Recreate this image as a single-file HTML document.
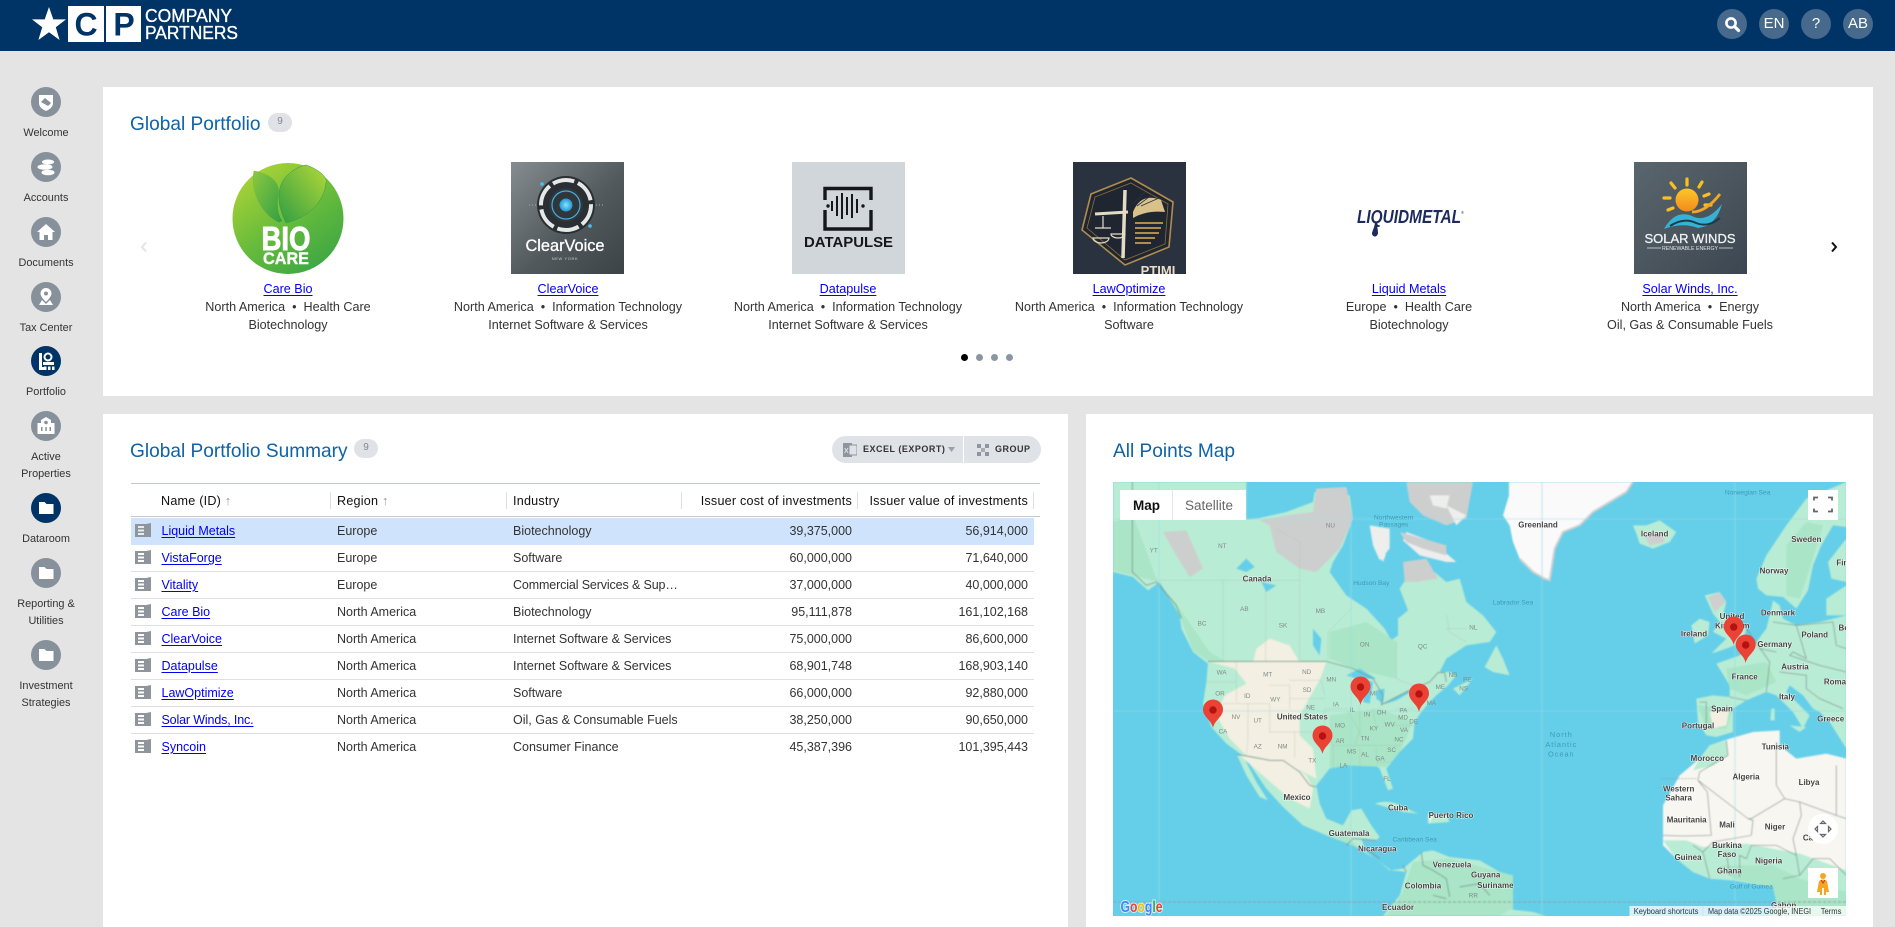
<!DOCTYPE html>
<html lang="en"><head><meta charset="utf-8"><title>Portfolio</title>
<style>
*{box-sizing:border-box}
html,body{margin:0;padding:0;width:1895px;height:927px;overflow:hidden;background:#e4e4e4;font-family:"Liberation Sans",sans-serif;color:#333}
.a{position:absolute}
#hdr{position:absolute;left:0;top:0;width:1895px;height:51px;background:#003366}
.hb{position:absolute;top:9px;width:30px;height:30px;border-radius:50%;background:#47698c;color:#fff;font-size:15px;line-height:30px;text-align:center}
.panel{position:absolute;background:#fff}
.ttl{position:absolute;font-size:19.1px;color:#0d62a8;line-height:24px;white-space:nowrap}
.bdg{position:absolute;width:24px;height:19px;border-radius:10px;background:#dfe2e7;color:#888;font-size:10px;line-height:18px;text-align:center}
.ci{position:absolute;left:31px;width:30px;height:30px;border-radius:50%;background:#87919c}
.ci.on{background:#003366}
.ci svg{position:absolute;left:0;top:0}
.sl{position:absolute;left:0;width:92px;text-align:center;font-size:10.9px;line-height:16px;color:#333;white-space:nowrap}
.cc{position:absolute;width:280px;text-align:center;font-size:12.6px;line-height:18px;white-space:nowrap;color:#333}
a{color:#0000ee;text-decoration:underline;text-underline-offset:2px}
.dot{position:absolute;top:354px;width:7px;height:7px;border-radius:50%;background:#8a96a3}
.th{position:absolute;top:492px;height:18px;line-height:18px;font-size:12.6px;letter-spacing:.22px;color:#111;white-space:nowrap}
.sep{position:absolute;top:492px;width:1px;height:17px;background:#dcdfe3}
.r{position:absolute;left:131px;width:903px;height:27px;border-bottom:1px solid #dcdfe3;font-size:12.5px;line-height:26px;white-space:nowrap;color:#333}
.r.sel{background:#cfe4fc;border-bottom-color:#cfe4fc}
.r span,.r a,.r svg{position:absolute}
.r svg{left:4px;top:5px}
.n{left:30.5px}.g{left:206px}.i{left:382px}
.c{right:182px}.v{right:6px}
.btn{position:absolute;top:436px;height:27px;background:#dfe2e7;font-size:9px;font-weight:700;letter-spacing:.5px;line-height:27px;color:#333;white-space:nowrap}
</style></head><body>

<div id="hdr">
<svg class="a" style="left:0;top:0" width="250" height="51">
<polygon points="49,7 53.3,19.4 66,19.4 55.8,27.2 59.6,40 49,32.3 38.4,40 42.2,27.2 32,19.4 44.7,19.4" fill="#fff"/>
<rect x="68" y="6" width="36" height="36" fill="#fff"/><rect x="106" y="6" width="35" height="36" fill="#fff"/>
<text x="86" y="35.500" text-anchor="middle" font-size="32" font-weight="700" fill="#003366" font-family="Liberation Sans">C</text>
<text x="124" y="35.500" text-anchor="middle" font-size="32" font-weight="700" fill="#003366" font-family="Liberation Sans">P</text>
<text x="145" y="22" font-size="18" fill="#fff" stroke="#fff" stroke-width=".35" font-family="Liberation Sans" textLength="87" lengthAdjust="spacingAndGlyphs">COMPANY</text>
<text x="145" y="39" font-size="18" fill="#fff" stroke="#fff" stroke-width=".35" font-family="Liberation Sans" textLength="93" lengthAdjust="spacingAndGlyphs">PARTNERS</text>
</svg>
<div class="hb" style="left:1717px"><svg width="30" height="30" style="position:absolute;left:0;top:0"><circle cx="14" cy="14" r="4.600" fill="none" stroke="#fff" stroke-width="2.600"/><path d="M17.500 17.500 L21.500 21.500" stroke="#fff" stroke-width="3.200" stroke-linecap="round"/></svg></div>
<div class="hb" style="left:1759px">EN</div>
<div class="hb" style="left:1801px">?</div>
<div class="hb" style="left:1843px">AB</div>
</div>

<!-- sidebar -->
<div class="ci" style="top:87px"><svg width="30" height="30"><path d="M8 8h14v8c0 4-3.500 6.500-7 8-3.500-1.500-7-4-7-8z" fill="#fff"/><path d="M10 15l4-4 6 5-3 3z" fill="#87919c"/></svg></div>
<div class="sl" style="top:125px">Welcome</div>
<div class="ci" style="top:152px"><svg width="30" height="30"><ellipse cx="17" cy="10" rx="6" ry="2.500" fill="#fff"/><ellipse cx="14" cy="15" rx="7.500" ry="2.800" fill="#fff"/><ellipse cx="17" cy="20.500" rx="6.500" ry="2.800" fill="#fff"/></svg></div>
<div class="sl" style="top:190px">Accounts</div>
<div class="ci" style="top:217px"><svg width="30" height="30"><path d="M15 7 L24 15 H21.500 V23 H17 V18 H13 V23 H8.500 V15 H6z" fill="#fff"/></svg></div>
<div class="sl" style="top:255px">Documents</div>
<div class="ci" style="top:282px"><svg width="30" height="30"><path d="M15 6a5.500 5.500 0 0 1 5.500 5.500c0 2.500-3 6-5.500 8.500-2.500-2.500-5.500-6-5.500-8.500A5.500 5.500 0 0 1 15 6z" fill="#fff"/><circle cx="15" cy="11.500" r="2" fill="#87919c"/><path d="M8 23l3-5 4 4 4-4 3 5z" fill="#fff"/></svg></div>
<div class="sl" style="top:320px">Tax Center</div>
<div class="ci on" style="top:346px"><svg width="30" height="30"><path d="M8 7h3v14h4v3H8z" fill="#fff"/><circle cx="17" cy="11" r="3.500" fill="none" stroke="#fff" stroke-width="2"/><path d="M12 16h11v3H12zM13 20.500h2.500V24H13zM17 20.500h2.500V24H17zM21 20.500h2.500V24H21z" fill="#fff"/></svg></div>
<div class="sl" style="top:384px">Portfolio</div>
<div class="ci" style="top:411px"><svg width="30" height="30"><path d="M15 6l5 3v3h3.500v11H6.500V12H10V9z" fill="#fff"/><circle cx="15" cy="11.500" r="1.800" fill="#87919c"/><path d="M10 16h1.500v4H10zM14.300 16h1.500v4h-1.500zM18.500 16H20v4h-1.500z" fill="#87919c"/></svg></div>
<div class="sl" style="top:449px">Active</div><div class="sl" style="top:466px">Properties</div>
<div class="ci on" style="top:493px"><svg width="30" height="30"><path d="M8 9h5.500l2 2H22.500v10H8z" fill="#fff"/></svg></div>
<div class="sl" style="top:531px">Dataroom</div>
<div class="ci" style="top:558px"><svg width="30" height="30"><path d="M8 9h5.500l2 2H22.500v10H8z" fill="#fff"/></svg></div>
<div class="sl" style="top:596px">Reporting &amp;</div><div class="sl" style="top:613px">Utilities</div>
<div class="ci" style="top:640px"><svg width="30" height="30"><path d="M8 9h5.500l2 2H22.500v10H8z" fill="#fff"/></svg></div>
<div class="sl" style="top:678px">Investment</div><div class="sl" style="top:695px">Strategies</div>

<!-- panels -->
<div class="panel" style="left:103px;top:87px;width:1770px;height:309px"></div>
<div class="panel" style="left:103px;top:414px;width:965px;height:513px"></div>
<div class="panel" style="left:1086px;top:414px;width:787px;height:513px"></div>

<div class="ttl" style="left:130px;top:113px">Global Portfolio</div>
<div class="bdg" style="left:268px;top:113px">9</div>

<!-- Carousel logos -->
<svg class="a" style="left:232px;top:163px" width="112" height="111" viewBox="0 0 112 111">
<defs>
<linearGradient id="cb" x1="0.1" y1="0" x2="0.8" y2="1"><stop offset="0" stop-color="#b5d635"/><stop offset=".55" stop-color="#66bb3c"/><stop offset="1" stop-color="#3aa545"/></linearGradient>
<linearGradient id="l1" x1="0" y1="0" x2="1" y2="1"><stop offset="0" stop-color="#8bc83f"/><stop offset="1" stop-color="#2f9e44"/></linearGradient>
<linearGradient id="l2" x1="0" y1="1" x2="1" y2="0"><stop offset="0" stop-color="#2f9e44"/><stop offset="1" stop-color="#b4d838"/></linearGradient>
</defs>
<circle cx="56" cy="55.500" r="55.500" fill="url(#cb)"/>
<path d="M47 60 C30 52 18 30 22 8 C36 10 48 18 47 30 C45 42 46 52 51 58z" fill="url(#l1)" stroke="#7fc03b" stroke-width=".6"/>
<path d="M54 60 C46 44 44 28 52 16 C58 8 68 3 74 2 C86 6 96 14 94 20 C92 38 78 54 54 60z" fill="url(#l2)" stroke="#2f9e44" stroke-width=".5"/>
<text x="54" y="87" text-anchor="middle" font-size="33" font-weight="700" fill="#fff" stroke="#fff" stroke-width=".9" font-family="Liberation Sans" textLength="49" lengthAdjust="spacingAndGlyphs">BIO</text>
<text x="54" y="101" text-anchor="middle" font-size="17" font-weight="700" fill="#fff" stroke="#fff" stroke-width=".4" font-family="Liberation Sans" textLength="46" lengthAdjust="spacingAndGlyphs">CARE</text>
</svg>

<svg class="a" style="left:511px;top:162px" width="113" height="112" viewBox="0 0 113 112">
<defs><linearGradient id="cv" x1="0" y1="0" x2="1" y2="1"><stop offset="0" stop-color="#868d90"/><stop offset=".55" stop-color="#52595d"/><stop offset="1" stop-color="#3c4347"/></linearGradient>
<radialGradient id="cvb"><stop offset="0" stop-color="#8fe0fb"/><stop offset="1" stop-color="#1c9ad6"/></radialGradient></defs>
<rect width="113" height="112" fill="url(#cv)"/>
<circle cx="55" cy="43" r="29" fill="#2a2f33"/>
<circle cx="55" cy="43" r="25" fill="none" stroke="#e6e8e8" stroke-width="4" stroke-dasharray="22 4"/>
<circle cx="55" cy="43" r="17" fill="#30363a"/>
<circle cx="55" cy="43" r="14" fill="none" stroke="#3fb0e4" stroke-width="1.200"/>
<circle cx="55" cy="43" r="6.500" fill="url(#cvb)"/>
<circle cx="31" cy="22" r="1.800" fill="#4cc1f0"/><circle cx="79" cy="64" r="1.800" fill="#4cc1f0"/>
<path d="M18 43h7M85 43h7" stroke="#aab" stroke-width="1" stroke-dasharray="1 2"/>
<text x="54" y="89" text-anchor="middle" font-size="17" fill="#fff" stroke="#fff" stroke-width=".3" font-family="Liberation Sans" textLength="79" lengthAdjust="spacingAndGlyphs">ClearVoice</text>
<text x="54" y="98" text-anchor="middle" font-size="4" fill="#ccc" font-family="Liberation Sans" letter-spacing=".6">NEW YORK</text>
</svg>

<svg class="a" style="left:792px;top:162px" width="113" height="112" viewBox="0 0 113 112">
<rect width="113" height="112" fill="#d0d6da"/>
<path d="M33 38 V26.500 H79 V38 M33 48 V67 H79 V48" fill="none" stroke="#15181b" stroke-width="3.400"/>
<path d="M40 39v10M45 34v20M50 31v26M55 35v18M60 32v24M65 37v14" stroke="#15181b" stroke-width="2" fill="none"/>
<circle cx="36" cy="44" r="1.700" fill="#15181b"/><circle cx="71" cy="44" r="1.700" fill="#15181b"/>
<text x="56.500" y="85" text-anchor="middle" font-size="15" font-weight="700" fill="#15181b" font-family="Liberation Sans" textLength="89" lengthAdjust="spacingAndGlyphs">DATAPULSE</text>
</svg>

<svg class="a" style="left:1073px;top:162px" width="113" height="112" viewBox="0 0 113 112">
<rect width="113" height="112" fill="#2a323f"/>
<polygon points="58,16 100,40 96,85 52,103 9,68 18,32" fill="#1f2632" stroke="#b08d4e" stroke-width="1.600"/>
<polygon points="58,21 95,42 92,82 52,98 14,66 22,35" fill="none" stroke="#8a6f3e" stroke-width=".8"/>
<path d="M52 28 L50 96" stroke="#e4dcc4" stroke-width="3.500" fill="none"/>
<path d="M22 52 L55 50" stroke="#e4dcc4" stroke-width="3" fill="none"/>
<path d="M60 50 Q68 30 88 38 L92 50 Q74 48 60 56z" fill="#d9c28a"/>
<path d="M60 42l12-12M64 44l16-12M68 44l18-8" stroke="#2a323f" stroke-width=".8"/>
<path d="M30 54v12M22 66 h16 M20 76 a8 5 0 0 0 16 0zM38 72 a7 4 0 0 0 14 0z" stroke="#e4dcc4" stroke-width="1.200" fill="none"/>
<g fill="#b08d4e"><rect x="62" y="60" width="28" height="2"/><rect x="62" y="65" width="26" height="2"/><rect x="62" y="70" width="24" height="2"/><rect x="62" y="75" width="20" height="2"/><rect x="62" y="80" width="16" height="2"/></g>
<text x="85" y="113" text-anchor="middle" font-size="13" font-weight="700" fill="#e8dfca" font-family="Liberation Sans">PTIMI</text>
</svg>

<svg class="a" style="left:1357px;top:205px" width="108" height="34" viewBox="0 0 108 34">
<text x="0" y="18" font-size="18" font-weight="700" font-style="italic" fill="#1c2a5e" font-family="Liberation Sans" textLength="104" lengthAdjust="spacingAndGlyphs">LIQUIDMETAL</text>
<path d="M18 18 C17 24 15 26 15 29 C16 32.500 20.500 32.500 21 28 C21 25 20 22 20 18z" fill="#1c2a5e"/>
<text x="104" y="9" font-size="4" fill="#1c2a5e" font-family="Liberation Sans">®</text>
</svg>

<svg class="a" style="left:1634px;top:162px" width="113" height="112" viewBox="0 0 113 112">
<defs><linearGradient id="sw" x1="0" y1="0" x2="1" y2="1"><stop offset="0" stop-color="#5a666e"/><stop offset="1" stop-color="#3c4650"/></linearGradient>
<linearGradient id="sun" x1="0" y1="0" x2="0" y2="1"><stop offset="0" stop-color="#fdc72a"/><stop offset="1" stop-color="#f28a1c"/></linearGradient></defs>
<rect width="113" height="112" fill="url(#sw)"/>
<g stroke="#fbbf24" stroke-width="3.200" stroke-linecap="round"><path d="M53 23v-6M41 26l-4-5M36 36h-6M39 46l-5 2M65 25l3-5M70 34l5-2M71 43l6 0"/></g>
<circle cx="53" cy="38" r="11.500" fill="url(#sun)"/>
<path d="M30 67 Q42 46 60 55 Q74 60 88 42 Q82 64 64 66 Q48 60 30 67z" fill="#36b3d4"/>
<path d="M36 64 Q50 55 62 61 Q74 66 86 56" stroke="#1e3a4e" stroke-width="2" fill="none"/>
<path d="M58 50 Q72 50 86 32" stroke="#f5a623" stroke-width="2.800" fill="none"/>
<text x="56" y="81" text-anchor="middle" font-size="13" fill="#f0f3f4" stroke="#f0f3f4" stroke-width=".3" font-family="Liberation Sans" textLength="91" lengthAdjust="spacingAndGlyphs">SOLAR WINDS</text>
<path d="M13 86h14M85 86h14" stroke="#dfe5e8" stroke-width=".7"/>
<text x="56" y="88" text-anchor="middle" font-size="5" fill="#e2e7ea" font-family="Liberation Sans" textLength="56" lengthAdjust="spacingAndGlyphs">RENEWABLE ENERGY</text>
</svg>

<div class="cc" style="left:148px;top:280px"><a href="#">Care Bio</a><br>North America &nbsp;•&nbsp; Health Care<br>Biotechnology</div>
<div class="cc" style="left:428px;top:280px"><a href="#">ClearVoice</a><br>North America &nbsp;•&nbsp; Information Technology<br>Internet Software &amp; Services</div>
<div class="cc" style="left:708px;top:280px"><a href="#">Datapulse</a><br>North America &nbsp;•&nbsp; Information Technology<br>Internet Software &amp; Services</div>
<div class="cc" style="left:989px;top:280px"><a href="#">LawOptimize</a><br>North America &nbsp;•&nbsp; Information Technology<br>Software</div>
<div class="cc" style="left:1269px;top:280px"><a href="#">Liquid Metals</a><br>Europe &nbsp;•&nbsp; Health Care<br>Biotechnology</div>
<div class="cc" style="left:1550px;top:280px"><a href="#">Solar Winds, Inc.</a><br>North America &nbsp;•&nbsp; Energy<br>Oil, Gas &amp; Consumable Fuels</div>

<svg class="a" style="left:139px;top:241px" width="10" height="12"><path d="M7 1.500 L3 6 L7 10.500" fill="none" stroke="#e2e4e7" stroke-width="2"/></svg>
<svg class="a" style="left:1829px;top:241px" width="10" height="12"><path d="M3 1.500 L7 6 L3 10.500" fill="none" stroke="#111" stroke-width="2"/></svg>
<div class="dot" style="left:961px;background:#000"></div><div class="dot" style="left:976px"></div><div class="dot" style="left:991px"></div><div class="dot" style="left:1006px"></div>

<!-- summary -->
<div class="ttl" style="left:130px;top:440px">Global Portfolio Summary</div>
<div class="bdg" style="left:354px;top:439px">9</div>
<div class="btn" style="left:832px;width:131px;border-radius:14px 0 0 14px">
<svg class="a" style="left:11px;top:7px" width="14" height="14"><rect x="0" y="0" width="9" height="14" fill="#8e959d"/><rect x="6" y="2" width="8" height="10" fill="#dfe2e7" stroke="#8e959d"/><text x="1" y="10" font-size="7" fill="#dfe2e7" font-family="Liberation Sans">X</text></svg>
<span class="a" style="left:31px">EXCEL (EXPORT)</span>
<svg class="a" style="left:116px;top:11px" width="8" height="6"><path d="M0 0h7L3.500 5z" fill="#9aa1a9"/></svg></div>
<div class="btn" style="left:964px;width:77px;border-radius:0 14px 14px 0">
<svg class="a" style="left:13px;top:8px" width="12" height="12"><g fill="#8e959d"><rect x="0" y="0" width="4" height="4"/><rect x="8" y="0" width="4" height="4"/><rect x="0" y="8" width="4" height="4"/><rect x="8" y="8" width="4" height="4"/><rect x="4" y="4" width="4" height="4" opacity=".7"/></g></svg>
<span class="a" style="left:31px">GROUP</span></div>

<div class="a" style="left:131px;top:483px;width:909px;height:1px;background:#c3c7ce"></div>
<div class="a" style="left:131px;top:516px;width:909px;height:1px;background:#c3c7ce"></div>
<div class="th" style="left:161px">Name (ID) <span style="color:#999;font-size:13px">↑</span></div>
<div class="th" style="left:337px">Region <span style="color:#999;font-size:13px">↑</span></div>
<div class="th" style="left:513px">Industry</div>
<div class="th" style="right:1043px">Issuer cost of investments</div>
<div class="th" style="right:867px">Issuer value of investments</div>
<div class="sep" style="left:330px"></div><div class="sep" style="left:506px"></div><div class="sep" style="left:681px"></div><div class="sep" style="left:857px"></div><div class="sep" style="left:1033px"></div>

<div class="r sel" style="top:518px"><svg width="16" height="14"><path d="M0 1h11l5-1v14H0z" fill="#8e959d"/><path d="M3 3h6v2H3zM3 6.500h6v2H3zM3 10h6v2H3z" fill="#e8eaed"/></svg><a class="n" href="#">Liquid Metals</a><span class="g">Europe</span><span class="i">Biotechnology</span><span class="c">39,375,000</span><span class="v">56,914,000</span></div>
<div class="r" style="top:545px"><svg width="16" height="14"><path d="M0 1h11l5-1v14H0z" fill="#8e959d"/><path d="M3 3h6v2H3zM3 6.500h6v2H3zM3 10h6v2H3z" fill="#fff"/></svg><a class="n" href="#">VistaForge</a><span class="g">Europe</span><span class="i">Software</span><span class="c">60,000,000</span><span class="v">71,640,000</span></div>
<div class="r" style="top:572px"><svg width="16" height="14"><path d="M0 1h11l5-1v14H0z" fill="#8e959d"/><path d="M3 3h6v2H3zM3 6.500h6v2H3zM3 10h6v2H3z" fill="#fff"/></svg><a class="n" href="#">Vitality</a><span class="g">Europe</span><span class="i" style="letter-spacing:-.13px">Commercial Services &amp; Sup…</span><span class="c">37,000,000</span><span class="v">40,000,000</span></div>
<div class="r" style="top:599px"><svg width="16" height="14"><path d="M0 1h11l5-1v14H0z" fill="#8e959d"/><path d="M3 3h6v2H3zM3 6.500h6v2H3zM3 10h6v2H3z" fill="#fff"/></svg><a class="n" href="#">Care Bio</a><span class="g">North America</span><span class="i">Biotechnology</span><span class="c">95,111,878</span><span class="v">161,102,168</span></div>
<div class="r" style="top:626px"><svg width="16" height="14"><path d="M0 1h11l5-1v14H0z" fill="#8e959d"/><path d="M3 3h6v2H3zM3 6.500h6v2H3zM3 10h6v2H3z" fill="#fff"/></svg><a class="n" href="#">ClearVoice</a><span class="g">North America</span><span class="i">Internet Software &amp; Services</span><span class="c">75,000,000</span><span class="v">86,600,000</span></div>
<div class="r" style="top:653px"><svg width="16" height="14"><path d="M0 1h11l5-1v14H0z" fill="#8e959d"/><path d="M3 3h6v2H3zM3 6.500h6v2H3zM3 10h6v2H3z" fill="#fff"/></svg><a class="n" href="#">Datapulse</a><span class="g">North America</span><span class="i">Internet Software &amp; Services</span><span class="c">68,901,748</span><span class="v">168,903,140</span></div>
<div class="r" style="top:680px"><svg width="16" height="14"><path d="M0 1h11l5-1v14H0z" fill="#8e959d"/><path d="M3 3h6v2H3zM3 6.500h6v2H3zM3 10h6v2H3z" fill="#fff"/></svg><a class="n" href="#">LawOptimize</a><span class="g">North America</span><span class="i">Software</span><span class="c">66,000,000</span><span class="v">92,880,000</span></div>
<div class="r" style="top:707px"><svg width="16" height="14"><path d="M0 1h11l5-1v14H0z" fill="#8e959d"/><path d="M3 3h6v2H3zM3 6.500h6v2H3zM3 10h6v2H3z" fill="#fff"/></svg><a class="n" href="#" style="letter-spacing:-.15px">Solar Winds, Inc.</a><span class="g">North America</span><span class="i">Oil, Gas &amp; Consumable Fuels</span><span class="c">38,250,000</span><span class="v">90,650,000</span></div>
<div class="r" style="top:734px;border-bottom:0"><svg width="16" height="14"><path d="M0 1h11l5-1v14H0z" fill="#8e959d"/><path d="M3 3h6v2H3zM3 6.500h6v2H3zM3 10h6v2H3z" fill="#fff"/></svg><a class="n" href="#">Syncoin</a><span class="g">North America</span><span class="i">Consumer Finance</span><span class="c">45,387,396</span><span class="v">101,395,443</span></div>

<!-- map -->
<div class="ttl" style="left:1113px;top:440px">All Points Map</div>
<svg class="a" style="left:1113px;top:482px" width="733" height="434" viewBox="0 0 733 434" font-family="Liberation Sans">
<rect width="733" height="434" fill="#65cfe9"/>
<g style="filter:blur(.9px)">
<g transform="scale(.33333)">
<!-- North & Central & South America -->
<path fill="#b9ecd4" d="M0,0 H440 V60 L480,30 H640 L710,40 L720,110 L690,190 L660,240 L650,270 L700,340 L760,380 L815,440 L835,475 L855,460 L855,410 L885,385 L860,320 L880,290 L940,250 L1000,300 L1040,290 L1060,360 L1110,400 L1150,450 L1130,480 L1060,490 L1000,530 L980,570 L1010,570 L1030,580 L1005,610 L970,640 L950,660 L925,690 L905,720 L900,770 L860,810 L820,860 L840,920 L825,925 L800,860 L780,845 L700,850 L650,860 L610,910 L620,965 L640,1010 L690,1030 L715,985 L745,980 L775,1030 L800,1065 L790,1075 L745,1070 L760,1110 L800,1140 L830,1165 L870,1160 L930,1110 L960,1105 L1010,1125 L1100,1135 L1160,1170 L1200,1195 V1302 H810 L860,1240 L880,1170 L835,1165 L780,1125 L720,1090 L640,1060 L570,1030 L510,975 L460,920 L395,825 L340,785 L295,735 L270,665 L280,600 L285,545 L240,510 L205,440 L200,400 L140,300 L105,325 L60,285 L0,270 Z"/>
<path fill="#b9ecd4" d="M370,815 L395,830 L430,900 L465,955 L440,945 L400,880 Z M1115,555 L1150,490 L1170,530 L1190,580 L1140,570 Z M1020,620 L1080,590 L1040,640 Z"/>
<path fill="#a9e5c6" d="M0,120 L60,100 L130,290 L200,380 L290,510 L340,540 L290,540 L240,505 L200,400 L140,300 L60,280 L0,265Z M650,450 L760,420 L850,480 L850,590 L720,560 L650,530Z M650,700 L800,680 L900,720 L860,810 L820,855 L700,850 L650,860Z M900,1140 L1010,1130 L1200,1180 V1302 H820 L870,1230Z M640,1055 L720,1090 L800,1140 L740,1100 L700,1060Z"/>
<path fill="#f3efe2" d="M290,540 H640 L622,590 L560,700 L560,760 L600,800 L610,890 L570,870 L510,840 L470,830 L400,820 L350,770 L310,700 L335,640 L400,605 L365,560Z M420,540 L430,500 L470,470 L530,490 L560,540Z M380,820 L510,835 L580,880 L600,920 L590,980 L530,950 Z"/>
<path fill="#cdcfce" d="M440,115 L520,100 L600,90 L610,20 L700,15 L720,110 L680,200 L610,270 L560,260 L490,210 L470,130 Z M880,0 H1080 L1060,110 L1000,130 L930,100 L890,60Z M870,240 L940,230 L975,290 L910,300 L875,300Z M150,150 L220,145 L270,260 L230,285 L190,220Z"/>
<path fill="#65cfe9" d="M400,0 H610 L600,60 L520,90 L440,108 L400,113Z M720,0 H880 V60 L930,110 L860,150 L790,130 L722,200 L725,110 Z"/>
<path fill="#eeeeec" d="M770,130 L830,140 L830,200 L800,235 L780,190 Z M1000,70 L1060,100 L1030,130Z M880,150 L960,180 L1030,240 L1000,240 L920,220 L870,175 Z M800,225 L820,215 L810,240Z M950,40 L1010,40 L1000,80 L960,70Z"/>
<path fill="#cdcfce" d="M860,150 L1000,190 L1000,220 L930,200 L880,180Z"/>
<!-- lakes -->
<path fill="#65cfe9" d="M370,260 L400,230 L425,255 L400,270 Z M445,300 L490,310 L460,330Z M600,440 L625,470 L620,520 L600,490 Z M700,580 L740,560 L790,590 L730,590 Z M765,595 L780,600 L770,665 L750,660 L758,620 Z M790,625 L815,620 L810,665 L790,650Z M810,668 L850,645 L885,625 L890,632 L850,655Z"/>
<!-- islands -->
<path fill="#b9ecd4" d="M785,965 Q830,950 870,975 L915,995 L870,990 Z"/>
<path fill="#b9ecd4" d="M945,995 L1000,1000 L1010,1020 L945,1025Z"/>
<path fill="#f3efe2" d="M945,1000 L960,1000 L950,1025Z"/>
<!-- borders -->
<g fill="none" stroke="#78908a" stroke-width="2.200">
<path d="M285,538 L640,538 L720,560 L780,590 L810,640 L805,668 L850,645 L890,625 L950,600 L975,572 L995,572 L1000,600"/>
<path d="M370,818 L400,822 L470,835 L510,835 L560,870 L590,910 L610,915"/>
<path d="M58,0 V270 L100,310 L130,300 L190,370 L205,410"/>
<path d="M925,1110 L930,1150 L960,1165 L1000,1190 L1010,1245 M1040,1215 L1100,1205 L1130,1240 M700,1090 L720,1070 L790,1075 M760,1100 L800,1130 M870,1150 L880,1170 M1000,1250 L960,1240"/>
</g>
<g fill="none" stroke="#a3b5ac" stroke-width="1.500" stroke-dasharray="4 3">
<path d="M330,295 V540 M458,315 V540 M560,180 V540 M560,180 L490,140 M130,295 H560 M645,450 L720,375 M645,450 V535 M850,480 V590 L900,610 M1000,400 L1010,450 L1060,480 M1000,440 H1060"/>
<path d="M280,600 H370 M370,540 V660 M330,665 L470,665 V750 M405,665 V770 L400,820 M470,610 L530,610 V680 M470,750 H545 V828 M530,650 H640 M530,595 H625 L635,640 M635,680 V760 M545,750 H640 L660,790 L660,860 M640,680 L700,680 L740,750 L720,800 M740,670 V760 M780,680 L790,740 M660,790 H860 M740,800 V850 M790,800 V840 L840,840 M850,680 H900 M840,730 L900,730"/>
</g>
</g>
<g transform="translate(400,0) scale(.33333)">
<!-- Greenland -->
<path fill="#fafafa" d="M-12,0 H360 L340,30 L240,90 L200,130 L150,150 L125,200 L110,295 L95,290 L60,270 L20,230 L0,180 L-10,130 L-30,100 L-12,40Z"/>
<path fill="none" stroke="#cfcfcf" stroke-width="6" d="M360,0 L340,30 L240,90 L200,130 L150,150 L125,200 L110,295 L95,290 L60,270 L20,230"/>
<!-- Iceland -->
<path fill="#b9ecd4" d="M360,130 L400,130 L440,115 L490,150 L470,180 L420,200 L380,185 L370,155Z"/>
<path fill="#cfcfcf" d="M395,160 L450,150 L455,180 L410,190Z"/>
<!-- Scandinavia -->
<path fill="#b9ecd4" d="M730,290 L760,220 L820,130 L880,50 L1000,0 V135 L960,130 L925,190 L900,250 L885,325 L850,380 L810,345 L760,340 L735,320Z"/>
<path fill="#b9ecd4" d="M945,240 L1000,170 V300 L955,290Z"/>
<path fill="#a9e5c6" d="M820,190 L880,120 L930,130 L890,260 L860,350 L820,340Z"/>
<!-- UK Ireland -->
<path fill="#b9ecd4" d="M575,340 L620,330 L640,360 L630,400 L660,420 L700,440 L690,480 L640,500 L595,515 L640,470 L600,450 L620,420 L600,395Z"/>
<path fill="#cfcfcf" d="M585,345 L620,332 L638,360 L605,390Z"/>
<path fill="#b9ecd4" d="M535,430 L560,410 L590,420 L585,460 L545,485Z"/>
<!-- Europe -->
<path fill="#b9ecd4" d="M610,545 L680,520 L730,480 L760,440 L770,400 L780,355 L800,370 L810,410 L850,430 L920,420 L1000,400 V310 L940,350 L940,400 L1000,400 V800 L950,720 L920,690 L900,680 L870,640 L830,610 L820,630 L890,700 L870,740 L840,690 L790,640 L760,630 L700,655 L660,680 L660,750 L610,765 L580,760 L555,720 L550,650 L600,640 L650,645 L650,610Z"/>
<path fill="#a9e5c6" d="M640,560 L760,540 L790,600 L700,640 L650,620Z M555,670 L660,680 L640,740 L580,740Z"/>
<path fill="#f3efe2" d="M590,690 L650,680 L640,730 L600,740Z"/>
<path fill="#b9ecd4" d="M775,680 L785,680 L785,715 L772,715Z M830,730 L880,735 L860,750Z"/>
<!-- Africa -->
<path fill="#f8f6f0" d="M590,790 L650,770 L720,750 L800,745 L800,790 L850,830 L940,815 L1000,830 V1302 H780 L790,1260 L780,1215 L660,1195 L590,1190 L540,1170 L490,1130 L450,1090 L450,970 L500,880 L560,830Z"/>
<path fill="#b9ecd4" d="M590,790 L640,775 L645,820 L600,850 L540,865 L560,830Z"/>
<path fill="#b9ecd4" d="M450,1075 L520,1075 L570,1095 L700,1085 L860,1115 L1000,1165 V1302 H780 L790,1260 L780,1215 L660,1195 L590,1190 L540,1170 L490,1130Z"/>
<path fill="#a9e5c6" d="M620,1150 L780,1150 L860,1190 L1000,1230 V1302 H780 L790,1260 L780,1215 L660,1190Z"/>
<path fill="#b9ecd4" d="M-10,1282 L60,1290 L100,1302 H-40Z"/>
<!-- borders -->
<g fill="none" stroke="#6f7f7a" stroke-width="1.600">
<path d="M555,895 L705,1010 L715,1010 L815,950 L860,960 L970,1000 V850 M583,930 L595,1060 L510,1062 L450,1060 M583,930 L555,895 M705,1010 L720,1015 L715,1060 L600,1080 L570,1110 M640,775 L645,820 L560,870 L555,895 M790,780 L790,850 L790,910 L815,950 M860,960 L865,1000 L840,1070 L850,1120 L790,1090 L715,1090 L700,1130 L680,1120 L680,1185 M640,1110 L650,1180 M850,1120 L860,1180 L810,1190 M860,1180 L900,1130 L950,1130 L1000,1180 M970,1000 L1000,1010 M540,1090 L570,1110 L590,1190 M580,730 L580,660 L560,660 M700,655 L650,645"/>
<path d="M700,440 L770,540 L760,630 M780,420 L850,430 L880,530 L840,510 L830,520 L920,550 M850,430 L960,420 L970,490 L1000,500 M800,570 L880,580 L880,620 L920,650 L990,680 M920,550 L1000,570 M740,500 L790,510"/>
</g>
<path d="M445,890 L550,890" stroke="#999" stroke-width="2" stroke-dasharray="6 4" fill="none"/>
</g>
<!-- grid lines -->
<g stroke="#9cdcec" stroke-width=".6" fill="none"><path d="M46,0V434 M429,0V434 M0,229H733 M0,37H733 M238,30V434 M622,0V434"/></g>
<path d="M0,420 H733" stroke="#8e9da5" stroke-width="1" stroke-dasharray="3 2" fill="none"/>
</g>
<!-- labels -->
<g transform="scale(.33333)" text-anchor="middle">
<g font-weight="700" font-size="24" fill="#444" stroke="#fff" stroke-width="3" paint-order="stroke" stroke-opacity=".75">
<text x="432" y="299">Canada</text><text x="568" y="713">United States</text><text x="552" y="954">Mexico</text><text x="855" y="986">Cuba</text><text x="1014" y="1008">Puerto Rico</text><text x="708" y="1062">Guatemala</text><text x="793" y="1108">Nicaragua</text><text x="1017" y="1156">Venezuela</text><text x="1118" y="1186">Guyana</text><text x="1147" y="1218">Suriname</text><text x="930" y="1220">Colombia</text><text x="855" y="1284">Ecuador</text>
<text x="1275" y="136">Greenland</text><text x="1625" y="163">Iceland</text><text x="2080" y="180">Sweden</text><text x="1983" y="275">Norway</text><text x="1995" y="400">Denmark</text><text x="1857" y="411">United</text><text x="1858" y="439">Kingdom</text><text x="1743" y="463">Ireland</text><text x="1985" y="495">Germany</text><text x="2105" y="467">Poland</text><text x="1895" y="592">France</text><text x="2046" y="563">Austria</text><text x="2022" y="653">Italy</text><text x="1827" y="689">Spain</text><text x="1755" y="740">Portugal</text><text x="2153" y="718">Greece</text><text x="1987" y="803">Tunisia</text><text x="1783" y="837">Morocco</text><text x="1899" y="893">Algeria</text><text x="2088" y="909">Libya</text><text x="1697" y="929">Western</text><text x="1697" y="956">Sahara</text><text x="1721" y="1021">Mauritania</text><text x="1842" y="1037">Mali</text><text x="1986" y="1042">Niger</text><text x="1842" y="1098">Burkina</text><text x="1842" y="1125">Faso</text><text x="1725" y="1134">Guinea</text><text x="1967" y="1145">Nigeria</text><text x="1849" y="1175">Ghana</text><text x="2012" y="1278">Gabon</text><text x="2085" y="1076">Ca</text>
<text x="2188" y="250" text-anchor="middle">Fin</text><text x="2166" y="608">Roma</text><text x="2192" y="445" text-anchor="middle">Be</text>
</g>
<g font-size="20" fill="#3f9ab3">
<text x="775" y="309">Hudson Bay</text><text x="842" y="112">Northwestern</text><text x="842" y="134">Passages</text><text x="905" y="1079">Caribbean Sea</text><text x="1200" y="367">Labrador Sea</text><text x="1904" y="37">Norwegian Sea</text><text x="1915" y="1220">Gulf of Guinea</text>
<g letter-spacing="3" font-size="22"><text x="1345" y="765">North</text><text x="1345" y="795">Atlantic</text><text x="1345" y="824">Ocean</text></g>
</g>
<g font-size="19" fill="#7f8a88">
<text x="122" y="212">YT</text><text x="328" y="198">NT</text><text x="652" y="137">NU</text><text x="394" y="387">AB</text><text x="267" y="430">BC</text><text x="510" y="437">SK</text><text x="622" y="393">MB</text><text x="755" y="494">ON</text><text x="929" y="500">QC</text><text x="1081" y="443">NL</text><text x="1020" y="585">NB</text><text x="1063" y="598">PE</text><text x="1052" y="626">NS</text><text x="326" y="578">WA</text><text x="464" y="584">MT</text><text x="581" y="576">ND</text><text x="655" y="598">MN</text><text x="582" y="630">SD</text><text x="321" y="641">OR</text><text x="403" y="648">ID</text><text x="487" y="658">WY</text><text x="593" y="682">NE</text><text x="669" y="673">IA</text><text x="718" y="690">IL</text><text x="781" y="641">MI</text><text x="762" y="704">IN</text><text x="805" y="698">OH</text><text x="871" y="692">PA</text><text x="870" y="713">MD</text><text x="902" y="724">DE</text><text x="982" y="621">ME</text><text x="955" y="669">MA</text><text x="369" y="711">NV</text><text x="434" y="722">UT</text><text x="330" y="754">CA</text><text x="434" y="799">AZ</text><text x="509" y="799">NM</text><text x="681" y="736">MO</text><text x="783" y="745">KY</text><text x="830" y="734">WV</text><text x="873" y="750">VA</text><text x="756" y="776">TN</text><text x="858" y="778">NC</text><text x="836" y="810">SC</text><text x="681" y="783">AR</text><text x="716" y="815">MS</text><text x="756" y="824">AL</text><text x="801" y="835">GA</text><text x="598" y="841">TX</text><text x="691" y="857">LA</text><text x="822" y="897">FL</text><text x="1081" y="1247">RR</text>
</g>
</g>
<!-- pins -->
<defs><g id="pin"><path d="M0,28 C-1.500,20 -10,17 -10,9.500 A10,10 0 0 1 10,9.500 C10,17 1.500,20 0,28z" fill="#ea4335"/><circle cx="0" cy="10" r="3.700" fill="#b31412"/></g></defs>
<use href="#pin" x="100" y="218"/><use href="#pin" x="247.500" y="195"/><use href="#pin" x="209.500" y="244"/><use href="#pin" x="306" y="202"/><use href="#pin" x="620.700" y="135"/><use href="#pin" x="632.700" y="153"/>
<!-- controls -->
<rect x="7" y="8" width="126" height="30" fill="#fff"/><path d="M59.500 8V38" stroke="#e6e6e6"/>
<text x="33.500" y="28" text-anchor="middle" font-size="13.500" font-weight="700" fill="#111" textLength="27" lengthAdjust="spacingAndGlyphs">Map</text>
<text x="96" y="28" text-anchor="middle" font-size="13.500" fill="#666">Satellite</text>
<rect x="695" y="8" width="30" height="30" fill="#fff"/>
<path d="M703,19V16H707 M717,16H721V19 M721,27V30H717 M707,30H703V27" transform="translate(-2,-.5)" fill="none" stroke="#666" stroke-width="1.800"/>
<circle cx="710" cy="347" r="15" fill="#fff"/>
<path d="M710,339l-2.500,2.500h5z M710,355l-2.500,-2.500h5z M702,347l2.500,-2.500v5z M718,347l-2.500,-2.500v5z" fill="none" stroke="#666" stroke-width="1.200"/>
<rect x="695" y="386" width="30" height="30" fill="#fff"/>
<circle cx="710" cy="394" r="3" fill="#f5a623"/><path d="M704,410 L706,399 Q710,396 714,399 L716,410 H713 V413 H711 V406 H709 V413 H707 V410z" fill="#f5a623"/><path d="M708,398 L710,401 L712,398" stroke="#c0392b" fill="none"/>
<rect x="516.500" y="424" width="216.500" height="10" fill="#fff" opacity=".72"/>
<path d="M590.500 424v10M638 424v10" stroke="#cfd8dc" stroke-width=".6" transform="translate(-.5,0)"/>
<g font-size="7.800" fill="#333"><text x="520.700" y="431.800" textLength="64.700" lengthAdjust="spacingAndGlyphs">Keyboard shortcuts</text><text x="595" y="431.800" textLength="103" lengthAdjust="spacingAndGlyphs">Map data ©2025 Google, INEGI</text><text x="707.700" y="431.800" textLength="20.700" lengthAdjust="spacingAndGlyphs">Terms</text></g>
<text x="7.500" y="430" font-size="15.500" font-weight="700" stroke="#fff" stroke-width="2" paint-order="stroke" stroke-opacity=".7" textLength="42" lengthAdjust="spacingAndGlyphs"><tspan fill="#4285f4">G</tspan><tspan fill="#ea4335">o</tspan><tspan fill="#fbbc05">o</tspan><tspan fill="#4285f4">g</tspan><tspan fill="#34a853">l</tspan><tspan fill="#ea4335">e</tspan></text>
</svg>
</body></html>
